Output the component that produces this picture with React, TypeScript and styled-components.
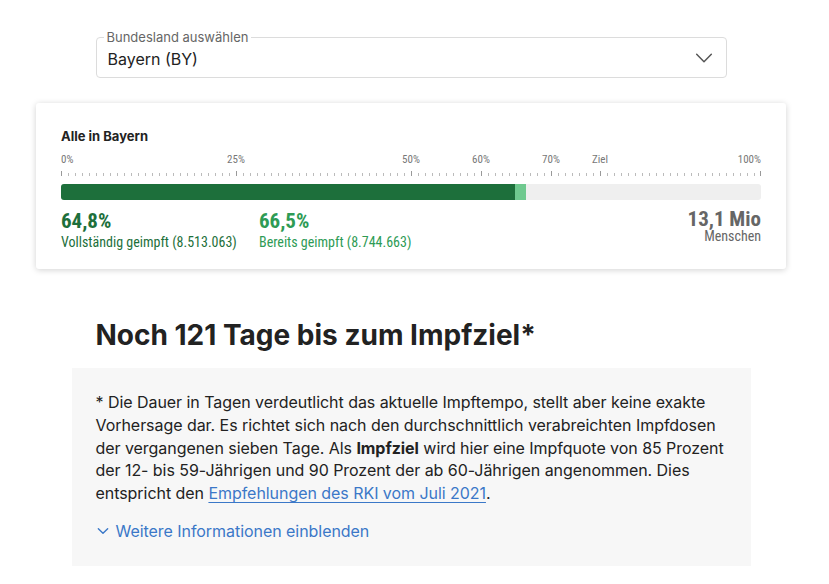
import React from "react"
import styled, { createGlobalStyle } from "styled-components"

const GlobalStyle = createGlobalStyle`
    body {
        margin: 0;
        background: #fff;
        font-family: Inter, "Noto Sans", sans-serif;
        color: #222;
    }
`

const condensed = `"Roboto Condensed", "Liberation Sans Narrow", Roboto, sans-serif`

const Page = styled.div`
    width: 822px;
    display: flex;
    flex-direction: column;
    align-items: center;
    padding-top: 37px;
`

const SelectBox = styled.div`
    position: relative;
    width: 631px;
    height: 41px;
    box-sizing: border-box;
    border: 1px solid #dcdcdc;
    border-radius: 4px;
    display: flex;
    align-items: center;
    justify-content: space-between;
    padding: 0 11px 0 11px;
`

const SelectLabel = styled.span`
    position: absolute;
    top: -8px;
    left: 7px;
    padding: 0 3px;
    background: #fff;
    font-size: 13px;
    line-height: 14px;
    color: #666;
`

const SelectValue = styled.span`
    font-size: 16px;
    color: #222;
    padding-top: 2px;
`

const Card = styled.section`
    width: 750px;
    margin-top: 25px;
    box-sizing: border-box;
    padding: 25px 25px 19px;
    background: #fff;
    border-radius: 3px;
    box-shadow: 0 1px 6px rgba(0, 0, 0, 0.18);
`

const CardTitle = styled.h3`
    margin: 0;
    font-size: 13px;
    line-height: 16px;
    font-weight: 700;
    color: #222;
`

const Scale = styled.div`
    position: relative;
    height: 18px;
    margin-top: 9px;
    font-family: ${condensed};
    font-size: 11px;
    color: #777;
`

const ScaleLabel = styled.span<{ $align: "start" | "center" | "end" }>`
    position: absolute;
    top: 0;
    line-height: 13px;
    transform: ${p => p.$align === "center" ? "translateX(-50%)" : p.$align === "end" ? "translateX(-100%)" : "none"};
`

const Ticks = styled.div`
    position: relative;
    height: 5px;
`

const Tick = styled.span<{ $major: boolean }>`
    position: absolute;
    bottom: 0;
    width: 1px;
    height: ${p => p.$major ? "5px" : "3px"};
    background: ${p => p.$major ? "#999" : "#bbb"};
`

const Bar = styled.div`
    display: flex;
    height: 16px;
    margin-top: 8px;
    border-radius: 3px;
    overflow: hidden;
    background: #efefef;
`

const BarPart = styled.div<{ $color: string }>`
    height: 100%;
    background: ${p => p.$color};
`

const Stats = styled.div`
    display: flex;
    align-items: flex-start;
    margin-top: 9px;
    font-family: ${condensed};
`

const Stat = styled.div<{ $color: string; $right?: boolean }>`
    width: 198px;
    color: ${p => p.$color};
    text-align: ${p => p.$right ? "right" : "left"};
    margin-left: ${p => p.$right ? "auto" : "0"};
    margin-top: ${p => p.$right ? "-2px" : "0"};
`

const StatValue = styled.div`
    font-size: 21px;
    font-weight: 700;
    line-height: 24px;
`

const StatLabel = styled.div<{ $gap: number }>`
    font-size: 14px;
    line-height: 16px;
    margin-top: ${p => p.$gap}px;
`

const Heading = styled.h2`
    width: 631px;
    margin: 49px 0 0;
    font-size: 28px;
    line-height: 34px;
    font-weight: 700;
    color: #222;
`

const Note = styled.div`
    width: 679px;
    margin-top: 16px;
    box-sizing: border-box;
    padding: 23px 18px 24px 24px;
    background: #f7f7f7;
`

const NoteText = styled.p`
    margin: 0;
    font-size: 16px;
    line-height: 22.75px;
    letter-spacing: -0.05px;
    color: #222;
`

const Link = styled.a`
    color: #3b78c8;
    text-decoration: underline;
    text-underline-offset: 3px;
`

const MoreButton = styled.button`
    display: flex;
    align-items: center;
    gap: 6px;
    margin-top: 15px;
    padding: 0;
    border: none;
    background: none;
    font-family: inherit;
    font-size: 16px;
    line-height: 22px;
    letter-spacing: -0.05px;
    color: #3b78c8;
    cursor: pointer;
`

const Chevron = ({ size, color, width }: { size: number; color: string; width: number }) => (
    <svg width={size} height={size} viewBox="0 0 24 24" fill="none" stroke={color} strokeWidth={width} strokeLinecap="round" strokeLinejoin="round">
        <path d="M4 8l8 8 8-8" />
    </svg>
)

const scaleLabels: { text: string; pos: number }[] = [
    { text: "0%", pos: 0 },
    { text: "25%", pos: 25 },
    { text: "50%", pos: 50 },
    { text: "60%", pos: 60 },
    { text: "70%", pos: 70 },
    { text: "Ziel", pos: 77 },
    { text: "100%", pos: 100 },
]

const majorTicks = [0, 25, 50, 60, 70, 77, 100]

export default function App() {
    const full = 64.8
    const first = 66.5

    return (
        <>
            <GlobalStyle />
            <Page>
                <SelectBox>
                    <SelectLabel>Bundesland auswählen</SelectLabel>
                    <SelectValue>Bayern (BY)</SelectValue>
                    <Chevron size={22} color="#555" width={1.6} />
                </SelectBox>

                <Card>
                    <CardTitle>Alle in Bayern</CardTitle>
                    <Scale>
                        {scaleLabels.map(l => (
                            <ScaleLabel
                                key={l.text}
                                $align={l.pos === 0 ? "start" : l.pos === 100 ? "end" : "center"}
                                style={{ left: `${l.pos}%` }}
                            >
                                {l.text}
                            </ScaleLabel>
                        ))}
                    </Scale>
                    <Ticks>
                        {Array.from({ length: 101 }, (_, i) => (
                            <Tick key={i} $major={majorTicks.includes(i)} style={{ left: `calc(${i}% - ${i === 100 ? 1 : 0}px)` }} />
                        ))}
                    </Ticks>
                    <Bar>
                        <BarPart $color="#1d6f3b" style={{ width: `${full}%` }} />
                        <BarPart $color="#6fc98f" style={{ width: `${first - full}%` }} />
                    </Bar>
                    <Stats>
                        <Stat $color="#1d6f3b">
                            <StatValue>64,8%</StatValue>
                            <StatLabel $gap={1}>Vollständig geimpft (8.513.063)</StatLabel>
                        </Stat>
                        <Stat $color="#2e9b55">
                            <StatValue>66,5%</StatValue>
                            <StatLabel $gap={1}>Bereits geimpft (8.744.663)</StatLabel>
                        </Stat>
                        <Stat $color="#666" $right>
                            <StatValue>13,1 Mio</StatValue>
                            <StatLabel $gap={-3}>Menschen</StatLabel>
                        </Stat>
                    </Stats>
                </Card>

                <Heading>Noch 121 Tage bis zum Impfziel*</Heading>

                <Note>
                    <NoteText>
                        * Die Dauer in Tagen verdeutlicht das aktuelle Impftempo, stellt aber keine exakte
                        Vorhersage dar. Es richtet sich nach den durchschnittlich verabreichten Impfdosen
                        der vergangenen sieben Tage. Als <strong>Impfziel</strong> wird hier eine Impfquote von 85 Prozent
                        der 12- bis 59-Jährigen und 90 Prozent der ab 60-Jährigen angenommen. Dies
                        entspricht den <Link href="#">Empfehlungen des RKI vom Juli 2021</Link>.
                    </NoteText>
                    <MoreButton>
                        <Chevron size={14} color="#3b78c8" width={2.4} />
                        Weitere Informationen einblenden
                    </MoreButton>
                </Note>
            </Page>
        </>
    )
}
